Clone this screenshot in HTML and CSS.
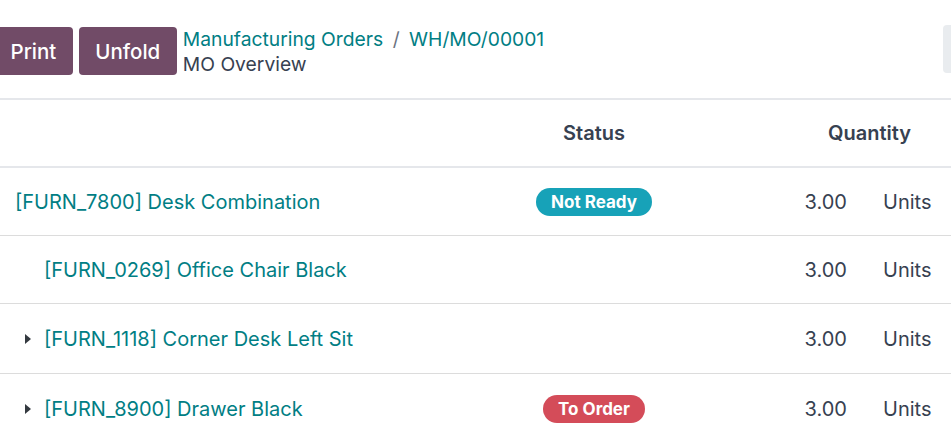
FILE: index.html
```html
<!DOCTYPE html>
<html lang="en">
<head>
  <meta charset="UTF-8">
  <title>MO Overview</title>
  <link rel="stylesheet" href="styles.css">
</head>
<body>
  <div class="control-panel">
    <div class="actions">
      <button class="btn-primary">Print</button>
      <button class="btn-primary">Unfold</button>
    </div>
    <div class="breadcrumbs">
      <div class="crumb-line">
        <a class="crumb-link" href="#">Manufacturing Orders</a>
        <span class="crumb-sep">/</span>
        <a class="crumb-link" href="#">WH/MO/00001</a>
      </div>
      <div class="crumb-current">MO Overview</div>
    </div>
    <div class="side-btn"></div>
  </div>

  <div class="overview">
    <div class="row head">
      <div class="cell name"></div>
      <div class="cell status">Status</div>
      <div class="cell qty-head">Quantity</div>
    </div>

    <div class="row">
      <div class="cell name"><a class="product" href="#">[FURN_7800] Desk Combination</a></div>
      <div class="cell status"><span class="badge info">Not Ready</span></div>
      <div class="cell qty">3.00</div>
      <div class="cell uom">Units</div>
    </div>

    <div class="row">
      <div class="cell name level-1"><a class="product" href="#">[FURN_0269] Office Chair Black</a></div>
      <div class="cell status"></div>
      <div class="cell qty">3.00</div>
      <div class="cell uom">Units</div>
    </div>

    <div class="row tall">
      <div class="cell name level-1"><span class="caret"></span><a class="product" href="#">[FURN_1118] Corner Desk Left Sit</a></div>
      <div class="cell status"></div>
      <div class="cell qty">3.00</div>
      <div class="cell uom">Units</div>
    </div>

    <div class="row tall">
      <div class="cell name level-1"><span class="caret"></span><a class="product" href="#">[FURN_8900] Drawer Black</a></div>
      <div class="cell status"><span class="badge danger">To Order</span></div>
      <div class="cell qty">3.00</div>
      <div class="cell uom">Units</div>
    </div>
  </div>
</body>
</html>
```

FILE: styles.css
```css
* {
  box-sizing: border-box;
}

body {
  margin: 0;
  background: #fff;
  font-family: Inter, "Noto Sans", sans-serif;
  color: #374151;
  overflow: hidden;
}

.control-panel {
  display: flex;
  align-items: flex-start;
  height: 100px;
  padding-top: 27px;
  border-bottom: 2px solid #e5e7eb;
}

.actions {
  display: flex;
  gap: 6px;
  margin-left: -6px;
}

.btn-primary {
  height: 48px;
  padding: 0 16.5px;
  background: #714b67;
  color: #fff;
  border: none;
  border-radius: 4px;
  font-family: inherit;
  font-size: 20.5px;
  font-weight: 500;
}

.breadcrumbs {
  margin-left: 6px;
  font-size: 19.3px;
  line-height: 25px;
}

.crumb-link {
  color: #017e84;
  text-decoration: none;
}

.crumb-sep {
  color: #6b7280;
  margin: 0 4px;
}

.side-btn {
  margin-left: auto;
  margin-right: -10px;
  width: 18px;
  height: 48px;
  margin-top: -2px;
  background: #e9ecef;
  border-radius: 4px;
}

.row {
  display: grid;
  grid-template-columns: 515px 158px 1fr 89px;
  align-items: center;
  height: 68px;
  border-bottom: 1.5px solid #dcdcdc;
  font-size: 20px;
}

.row.head {
  border-bottom: 2px solid #e5e7eb;
  font-weight: 600;
}

.row.tall {
  height: 70px;
}

.cell.name {
  padding-left: 15px;
  display: flex;
  align-items: center;
}

.cell.name.level-1 {
  padding-left: 44px;
}

.caret {
  width: 0;
  height: 0;
  border-top: 5px solid transparent;
  border-bottom: 5px solid transparent;
  border-left: 6px solid #343a40;
  margin-left: -19px;
  margin-right: 13px;
}

.product {
  color: #017e84;
  text-decoration: none;
}

.cell.status {
  text-align: center;
}

.qty-head {
  grid-column: 3 / 5;
  text-align: right;
  padding-right: 40px;
}

.cell.qty {
  text-align: right;
  padding-right: 15px;
}

.cell.uom {
  padding-left: 21px;
}

.badge {
  display: inline-block;
  padding: 3px 15px;
  border-radius: 14px;
  color: #fff;
  font-size: 17px;
  font-weight: 700;
  line-height: 22px;
}

.badge.info {
  background: #17a2b8;
}

.badge.danger {
  background: #d44c59;
}
```
